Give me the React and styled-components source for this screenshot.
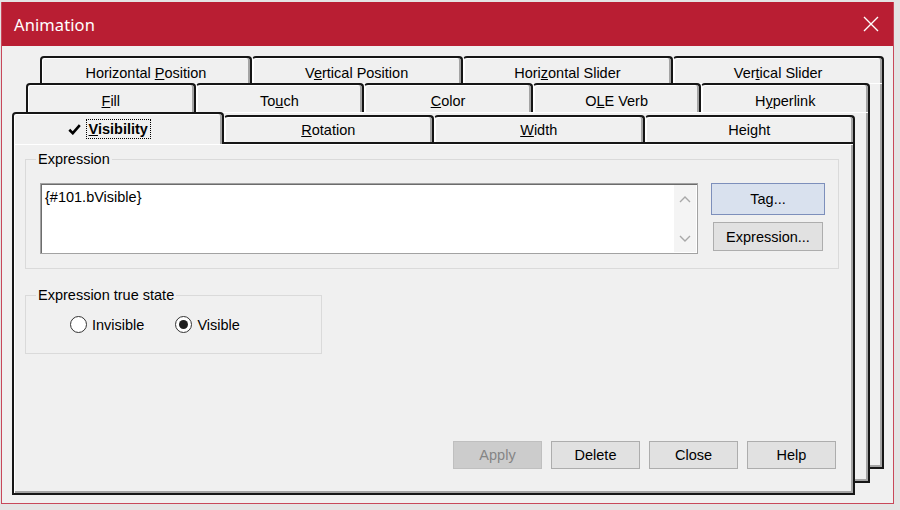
import React from 'react';
import styled, { createGlobalStyle } from 'styled-components';

const GlobalStyle = createGlobalStyle`
  html, body {
    margin: 0;
    padding: 0;
    background: #e4e4e4;
  }
  body {
    font-family: "Liberation Sans", Arial, sans-serif;
    font-size: 14.5px;
    color: #000;
  }
`;

const Screen = styled.div`
  width: 900px;
  height: 510px;
  padding: 2px 0 0 1px;
  box-sizing: border-box;
`;

const Window = styled.div`
  width: 893px;
  height: 502px;
  box-sizing: border-box;
  border: 1px solid #c8485a;
  border-top: none;
  background: #f0f0f0;
  display: flex;
  flex-direction: column;
`;

const TitleBar = styled.div`
  height: 44px;
  flex-shrink: 0;
  background: #b91e33;
  color: #fff;
  display: flex;
  align-items: center;
  justify-content: space-between;
  padding: 0 14px 0 12px;
`;

const Title = styled.span`
  font-family: "Noto Sans", "Open Sans", sans-serif;
  font-size: 16.5px;
  letter-spacing: 0.1px;
`;

const CloseIcon = () => (
  <svg width="16" height="16" viewBox="0 0 16 16">
    <path d="M1 1 L15 15 M15 1 L1 15" stroke="#fff" strokeWidth="1.4" fill="none" />
  </svg>
);

const Body = styled.div`
  flex: 1;
  padding: 10px 0 0 10px;
`;

const Stack = styled.div`
  display: grid;
  align-items: start;
  justify-items: start;
`;

const Page = styled.div`
  grid-area: 1 / 1;
  margin: ${p => p.$top}px 0 0 ${p => p.$left}px;
  width: ${p => p.$width}px;
  height: ${p => p.$height}px;
  display: flex;
  flex-direction: column;
`;

const TabRow = styled.div`
  display: flex;
  height: ${p => p.$height}px;
  flex-shrink: 0;
`;

const Tab = styled.div`
  flex: 1 1 0;
  min-width: 0;
  box-sizing: border-box;
  display: flex;
  align-items: center;
  justify-content: center;
  padding-top: ${p => p.$pad || 0}px;
  margin-top: ${p => (p.$active ? 0 : p.$drop || 0)}px;
  margin-bottom: ${p => (p.$active ? -2 : 0)}px;
  position: relative;
  z-index: ${p => (p.$active ? 1 : 0)};
  background: #f0f0f0;
  border: 2px solid #161616;
  border-bottom: none;
  border-left: 1px solid #fff;
  border-radius: 4px 4px 0 0;
  box-shadow: inset -2px 0 0 #a4a4a4, inset 1px 1px 0 #fff;
  font-weight: ${p => (p.$active ? 700 : 400)};
  white-space: nowrap;

  &:first-child {
    border-left: 2px solid #161616;
  }
`;

const Label = styled.span`
  white-space: nowrap;
`;

const ActiveLabel = styled.span`
  display: flex;
  align-items: center;
  gap: 7px;
  margin-right: 19px;
`;

const Sheet = styled.div`
  flex: 1;
  box-sizing: border-box;
  background: #f0f0f0;
  border: 2px solid #161616;
  border-top: ${p => (p.$front ? '2px solid #161616' : 'none')};
  box-shadow: inset 1px 1px 0 #fff, inset -2px -2px 0 #a4a4a4;
  display: flex;
  flex-direction: column;
  padding: 15px 14px 24px 11px;
`;

const Focus = styled.span`
  outline: 1px dotted #000;
  outline-offset: 1px;
  padding: 0 1px;
`;

const Check = () => (
  <svg width="13" height="11" viewBox="0 0 13 11">
    <path d="M1.3 5.8 L4.8 9.2 L11.8 1.2" stroke="#000" strokeWidth="2.6" fill="none" />
  </svg>
);

const Group = styled.div`
  box-sizing: border-box;
  width: ${p => p.$width};
  height: ${p => p.$height}px;
  margin-top: ${p => p.$top || 0}px;
  border: 1px solid #dadada;
  display: flex;
  flex-direction: column;
`;

const Caption = styled.div`
  align-self: flex-start;
  margin: -9px 0 0 10px;
  padding: 0 2px;
  line-height: 17px;
  background: #f0f0f0;
`;

const ExprRow = styled.div`
  display: flex;
  gap: 13px;
  margin-top: 15px;
  padding: 0 12px 0 14px;
`;

const ExprBox = styled.div`
  width: 658px;
  height: 71px;
  box-sizing: border-box;
  background: #fff;
  border: 1px solid #a2a2a2;
  box-shadow: inset 1px 1px 0 #6c6c6c;
  display: flex;
`;

const ExprText = styled.div`
  flex: 1;
  padding: 5px 0 0 4px;
`;

const ScrollTrack = styled.div`
  width: 22px;
  margin: 1px 1px 1px 0;
  background: #f4f4f4;
  display: flex;
  flex-direction: column;
  justify-content: space-between;
  align-items: center;
  padding: 11px 0 10px;
`;

const Chevron = ({ down }) => (
  <svg width="12" height="7" viewBox="0 0 12 7">
    <path d={down ? 'M1 1 L6 6 L11 1' : 'M1 6 L6 1 L11 6'} stroke="#a8a8a8" strokeWidth="1.4" fill="none" />
  </svg>
);

const ButtonCol = styled.div`
  display: flex;
  flex-direction: column;
  align-items: center;
  gap: 7px;
`;

const Button = styled.button`
  font: inherit;
  color: ${p => (p.disabled ? '#858585' : '#000')};
  width: ${p => p.$w || 89}px;
  height: ${p => p.$h || 28}px;
  padding: 0;
  box-sizing: border-box;
  background: ${p => (p.$focus ? '#d9e1ee' : p.disabled ? '#cccccc' : '#e1e1e1')};
  border: 1px solid ${p => (p.$focus ? '#7d8fbb' : p.disabled ? '#bfbfbf' : '#adadad')};
`;

const RadioRow = styled.div`
  display: flex;
  gap: 31px;
  margin-top: 12px;
  padding-left: 44px;
`;

const RadioLabel = styled.label`
  display: inline-flex;
  align-items: center;
  gap: 5px;
`;

const RadioDot = styled.span`
  width: 17px;
  height: 17px;
  box-sizing: border-box;
  border-radius: 50%;
  border: 1px solid #333;
  background: #fff;
  display: flex;
  align-items: center;
  justify-content: center;

  &::after {
    content: '';
    width: 9px;
    height: 9px;
    border-radius: 50%;
    background: ${p => (p.$on ? '#1e1e1e' : 'transparent')};
  }
`;

const Footer = styled.div`
  margin-top: auto;
  display: flex;
  justify-content: flex-end;
  gap: 9px;
  padding-right: 3px;
`;

export default function App() {
  return (
    <Screen>
      <GlobalStyle />
      <Window>
        <TitleBar>
          <Title>Animation</Title>
          <CloseIcon />
        </TitleBar>
        <Body>
          <Stack>
            <Page $top={0} $left={28} $width={844} $height={413}>
              <TabRow $height={27}>
                <Tab $pad={4}><Label>Horizontal <u>P</u>osition</Label></Tab>
                <Tab $pad={4}><Label>V<u>e</u>rtical Position</Label></Tab>
                <Tab $pad={4}><Label>Hori<u>z</u>ontal Slider</Label></Tab>
                <Tab $pad={4}><Label>Ver<u>t</u>ical Slider</Label></Tab>
              </TabRow>
              <Sheet />
            </Page>

            <Page $top={27} $left={14} $width={844} $height={400}>
              <TabRow $height={29}>
                <Tab $pad={5}><Label><u>F</u>ill</Label></Tab>
                <Tab $pad={5}><Label>To<u>u</u>ch</Label></Tab>
                <Tab $pad={5}><Label><u>C</u>olor</Label></Tab>
                <Tab $pad={5}><Label>O<u>L</u>E Verb</Label></Tab>
                <Tab $pad={5}><Label>H<u>y</u>perlink</Label></Tab>
              </TabRow>
              <Sheet />
            </Page>

            <Page $top={56} $left={0} $width={843} $height={383}>
              <TabRow $height={30}>
                <Tab $active>
                  <ActiveLabel>
                    <Check />
                    <Focus><u>V</u>isibility</Focus>
                  </ActiveLabel>
                </Tab>
                <Tab $drop={3}><Label><u>R</u>otation</Label></Tab>
                <Tab $drop={3}><Label><u>W</u>idth</Label></Tab>
                <Tab $drop={3}><Label>Hei<u>g</u>ht</Label></Tab>
              </TabRow>
              <Sheet $front>
                <Group $width="100%" $height={110}>
                  <Caption>Expression</Caption>
                  <ExprRow>
                    <ExprBox>
                      <ExprText>{'{#101.bVisible}'}</ExprText>
                      <ScrollTrack>
                        <Chevron />
                        <Chevron down />
                      </ScrollTrack>
                    </ExprBox>
                    <ButtonCol>
                      <Button $focus $w={114} $h={32}>Tag...</Button>
                      <Button $w={110} $h={29}>Expression...</Button>
                    </ButtonCol>
                  </ExprRow>
                </Group>

                <Group $width="297px" $height={59} $top={26}>
                  <Caption>Expression true state</Caption>
                  <RadioRow>
                    <RadioLabel>
                      <RadioDot />
                      Invisible
                    </RadioLabel>
                    <RadioLabel>
                      <RadioDot $on />
                      Visible
                    </RadioLabel>
                  </RadioRow>
                </Group>

                <Footer>
                  <Button disabled>Apply</Button>
                  <Button>Delete</Button>
                  <Button>Close</Button>
                  <Button>Help</Button>
                </Footer>
              </Sheet>
            </Page>
          </Stack>
        </Body>
      </Window>
    </Screen>
  );
}
